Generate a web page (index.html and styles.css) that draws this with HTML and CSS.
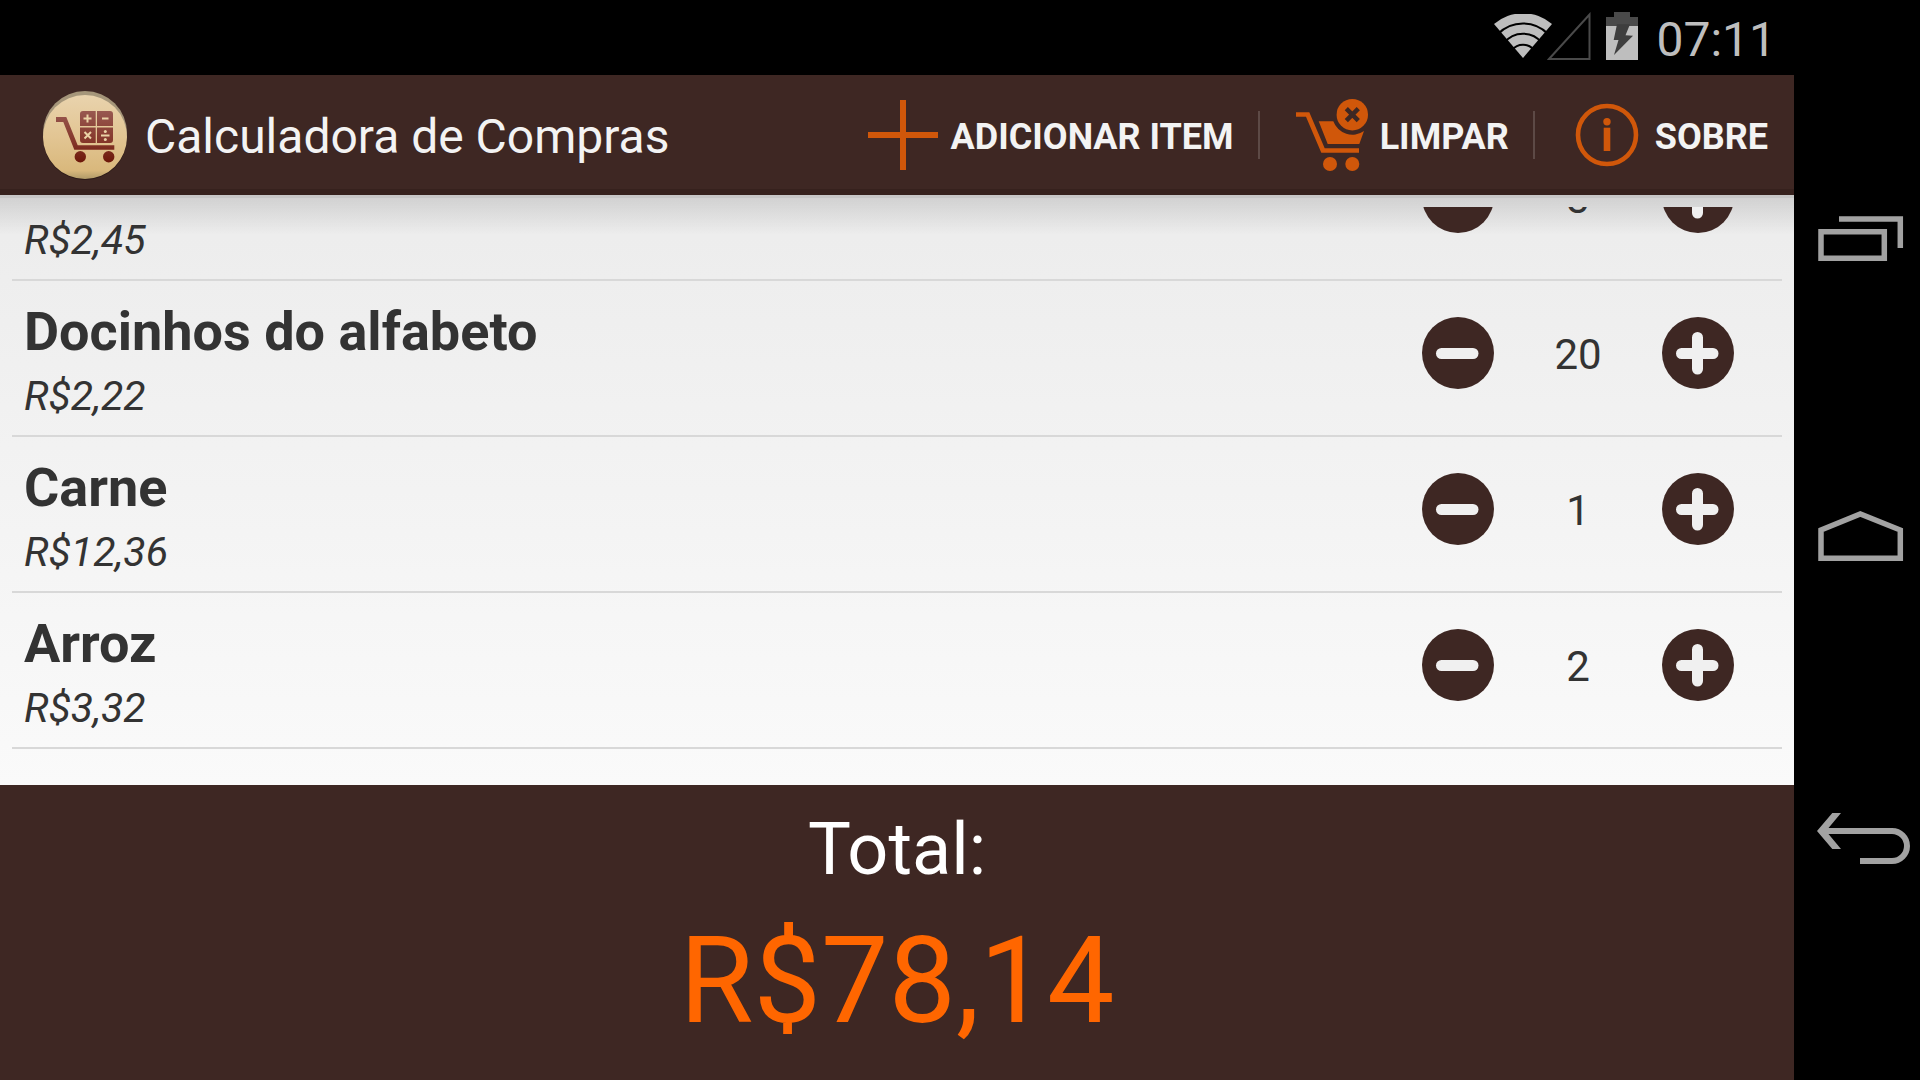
FILE: index.html
```html
<!DOCTYPE html>
<html lang="pt-BR">
<head>
<meta charset="utf-8">
<title>Calculadora de Compras</title>
<link rel="stylesheet" href="styles.css">
</head>
<body>
<svg class="sprite" aria-hidden="true">
  <symbol id="minus" viewBox="0 0 72 72"><circle cx="36" cy="36" r="36" fill="#3e2723"/><path d="M19.500 36.500H51" stroke="#f0f0f0" stroke-width="11" stroke-linecap="round"/></symbol>
  <symbol id="plus" viewBox="0 0 72 72"><circle cx="36" cy="36" r="36" fill="#3e2723"/><path d="M19.500 36.500H51M35.500 20.500V52" stroke="#f0f0f0" stroke-width="11" stroke-linecap="round"/></symbol>
</svg>
<div class="device">
  <div class="screen">
    <div class="status">
      <svg class="wifi" width="58" height="44" viewBox="0 0 58 44"><path d="M29 44L0 10A44.500 44.500 0 0 1 58 10Z" fill="#bebebe"/><g fill="none" stroke="#000" stroke-width="2"><path d="M4 20A35 35 0 0 1 54 20"/><path d="M10 29A24 24 0 0 1 48 29"/><path d="M18 36A14 14 0 0 1 40 36"/></g></svg>
      <svg class="signal" width="44" height="49" viewBox="0 0 44 49"><path d="M2 47L42.500 2.500V47Z" fill="none" stroke="#4a4a4a" stroke-width="2"/></svg>
      <svg class="battery" width="32" height="48" viewBox="0 0 32 48"><path d="M8 0H24V5H32V14H0V5H8Z" fill="#4a4a4a"/><path d="M0 14H32V48H0Z" fill="#bebebe"/><path d="M11 12.300H24L19.500 23.300L27 23.700L8 43L12.500 28H7.700Z" fill="#3e3e3e"/></svg>
      <time class="clock">07:11</time>
    </div>
    <header class="bar">
      <svg class="logo" width="96" height="96" viewBox="-1 0 96 96">
        <defs>
          <linearGradient id="cream" x1="0" y1="0" x2="0" y2="1"><stop offset="0" stop-color="#e9d3ad"/><stop offset=".5" stop-color="#e2c593"/><stop offset=".9" stop-color="#d9b87c"/><stop offset="1" stop-color="#b09a68"/></linearGradient>
          <linearGradient id="wine" gradientUnits="userSpaceOnUse" x1="0" y1="24" x2="0" y2="76"><stop offset="0" stop-color="#985850"/><stop offset=".6" stop-color="#843629"/><stop offset="1" stop-color="#6c1608"/></linearGradient>
        </defs>
        <circle cx="48" cy="51" r="42" fill="#2c1a17"/>
        <circle cx="48" cy="46" r="42" fill="#a5967a"/>
        <circle cx="48" cy="50" r="42" fill="url(#cream)"/>
        <g fill="url(#wine)">
          <path d="M19 30H29.300L40.700 58.300H77.300V62.700H37.300L26.300 35H19Z"/>
          <path d="M46 24H58.700V39H43V27Q43 24 46 24ZM60 24H73Q76 24 76 27V39H60ZM43 40.500H58.700V56H46Q43 56 43 53ZM60 40.500H76V53Q76 56 73 56H60Z"/>
          <circle cx="43.300" cy="69.700" r="5.700"/><circle cx="71.700" cy="69.700" r="5.700"/>
        </g>
        <path d="M46.500 31.500H54.500M50.500 27.500V35.500M65 31.500H71.500M47.500 45L54 51.500M54 45L47.500 51.500M64 48.500H72.500" stroke="#ead2a6" stroke-width="2" fill="none"/>
        <circle cx="68.300" cy="44.500" r="1.500" fill="#ead2a6"/><circle cx="68.300" cy="52.500" r="1.500" fill="#ead2a6"/>
      </svg>
      <h1 class="title">Calculadora de Compras</h1>
      <nav class="actions">
        <button class="action" type="button"><svg width="96" height="96" viewBox="0 0 96 96"><path d="M13 48H83M48 13V83" stroke="#d0570a" stroke-width="6"/></svg><span>ADICIONAR ITEM</span></button>
        <button class="action" type="button"><svg width="96" height="96" viewBox="0 0 96 96" fill="#d0570a"><path d="M12 25.300H25.300L40.700 61.300H75V65.700H37.300L22 29.700H12Z"/><path d="M34.700 34.300H49.300A20.300 20.300 0 0 0 80 44L75.300 57H43.700Z"/><circle cx="68.300" cy="27.700" r="15.700"/><circle cx="46" cy="77" r="7"/><circle cx="68.300" cy="77" r="7"/><path d="M62.300 21.700L74.300 33.700M74.300 21.700L62.300 33.700" stroke="#3e2723" stroke-width="4.500"/></svg><span>LIMPAR</span></button>
        <button class="action" type="button"><svg width="96" height="96" viewBox="0 0 96 96"><circle cx="48" cy="48" r="29" fill="none" stroke="#d0570a" stroke-width="4.600"/><circle cx="48" cy="34.700" r="3.700" fill="#d0570a"/><path d="M44.700 40.700H51.300V64H44.700Z" fill="#d0570a"/></svg><span>SOBRE</span></button>
      </nav>
    </header>
    <main class="content">
      <ul class="list">
        <li class="item">
          <div class="info"><span class="price">R$2,45</span></div>
          <div class="stepper"><button type="button" aria-label="Diminuir"><svg><use href="#minus"/></svg></button><output class="qty">3</output><button type="button" aria-label="Aumentar"><svg><use href="#plus"/></svg></button></div>
        </li>
        <li class="item">
          <div class="info"><h2 class="name">Docinhos do alfabeto</h2><span class="price">R$2,22</span></div>
          <div class="stepper"><button type="button" aria-label="Diminuir"><svg><use href="#minus"/></svg></button><output class="qty">20</output><button type="button" aria-label="Aumentar"><svg><use href="#plus"/></svg></button></div>
        </li>
        <li class="item">
          <div class="info"><h2 class="name">Carne</h2><span class="price">R$12,36</span></div>
          <div class="stepper"><button type="button" aria-label="Diminuir"><svg><use href="#minus"/></svg></button><output class="qty">1</output><button type="button" aria-label="Aumentar"><svg><use href="#plus"/></svg></button></div>
        </li>
        <li class="item">
          <div class="info"><h2 class="name">Arroz</h2><span class="price">R$3,32</span></div>
          <div class="stepper"><button type="button" aria-label="Diminuir"><svg><use href="#minus"/></svg></button><output class="qty">2</output><button type="button" aria-label="Aumentar"><svg><use href="#plus"/></svg></button></div>
        </li>
      </ul>
    </main>
    <footer class="total">
      <span class="total-label">Total:</span>
      <strong class="total-value">R$78,14</strong>
    </footer>
  </div>
  <nav class="keys">
    <button type="button" aria-label="Recentes"><svg width="126" height="100" viewBox="0 0 126 100" fill="none" stroke="#a2a2a2" stroke-width="5.500"><path d="M27 41.700H90.300V68.300H27ZM45 29H106.300V58"/></svg></button>
    <button type="button" aria-label="Início"><svg width="126" height="100" viewBox="0 0 126 100" fill="none" stroke="#a2a2a2" stroke-width="5.500"><path d="M27 40L66.300 24L106.300 40V68.300H27Z"/></svg></button>
    <button type="button" aria-label="Voltar"><svg width="126" height="100" viewBox="0 0 126 100"><path d="M30 41H98A15 15 0 0 1 98 71H66" fill="none" stroke="#a2a2a2" stroke-width="6"/><path d="M23 41L38.300 23H47L32 41L47 59H38.300Z" fill="#a2a2a2"/></svg></button>
  </nav>
</div>
</body>
</html>
```
FILE: styles.css
```css
* { box-sizing: border-box; }
body { margin: 0; background: #000; font-family: Roboto, sans-serif; color: #333; }
h1, h2, ul { margin: 0; padding: 0; }
button { border: 0; padding: 0; background: none; font: inherit; color: inherit; }
svg { display: block; flex: none; }
.sprite { position: absolute; width: 0; height: 0; }

.device { display: grid; grid-template-columns: minmax(0, 1fr) 126px; min-height: 100vh; }
.screen { display: flex; flex-direction: column; height: 100vh; }

.status { flex: none; display: flex; justify-content: flex-end; align-items: flex-start; height: 75px; padding: 12px 18px 0 0; }
.wifi { margin: 2px -5px 0 0; }
.battery { margin: 0 18px 0 15px; }
.clock { font-size: 48px; line-height: 56px; color: #bebebe; }

.bar { flex: none; display: flex; align-items: center; height: 120px; padding-left: 36px; background: #3e2723; box-shadow: inset 0 -6px #36211d; color: #f3f3f3; }
.logo { margin-right: 13px; }
.title { flex: 1; padding-top: 4px; font-size: 48px; line-height: 56px; font-weight: 400; white-space: nowrap; }
.actions { display: flex; align-items: center; padding-right: 2px; }
.action { display: flex; align-items: center; padding-right: 24px; font-size: 36px; line-height: 42px; font-weight: 700; white-space: nowrap; }
.action span { padding-top: 4px; }
.action + .action::before { content: ""; width: 2px; height: 48px; margin-right: 24px; background: #5d4a46; }

.content { flex: 1; min-height: 0; display: flex; padding-top: 12px; background: linear-gradient(#c6c6c6 0 3px, transparent 3px), linear-gradient(rgba(0, 0, 0, .12), rgba(0, 0, 0, 0) 40px), linear-gradient(#ececec, #fafafa); }
.list { flex: 1; display: flex; flex-direction: column; justify-content: flex-end; overflow: hidden; padding: 0 12px 36px; list-style: none; }
.item { flex: none; display: flex; justify-content: space-between; height: 156px; border-bottom: 2px solid #d8d8d8; padding: 0 48px 0 12px; }
.info { display: flex; flex-direction: column; justify-content: flex-end; gap: 6px; padding-bottom: 13px; }
.name { font-size: 54px; line-height: 64px; font-weight: 700; }
.price { font-size: 41px; line-height: 52px; font-style: italic; }
.stepper { display: grid; grid-template-columns: 72px 168px 72px; align-items: center; height: 72px; margin-top: 36px; }
.stepper svg { width: 72px; height: 72px; }
.qty { padding-top: 3px; font-size: 42px; line-height: 48px; text-align: center; }

.total { flex: none; display: flex; flex-direction: column; align-items: center; gap: 6px; padding: 20px 0 19px; background: #3e2723; color: #fff; }
.total-label { font-size: 72px; line-height: 90px; }
.total-value { font-size: 120px; line-height: 160px; font-weight: 400; color: #ff6600; }

.keys { display: grid; grid-template-rows: repeat(3, 300px); align-content: center; }
.keys button { display: flex; align-items: center; justify-content: center; }
```
